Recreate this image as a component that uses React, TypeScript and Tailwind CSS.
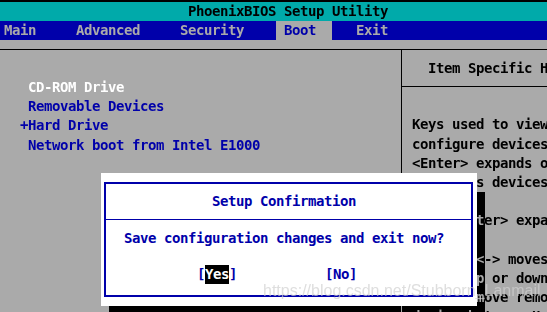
import React from 'react';

const menuItems = [
  { label: 'Main', w: 'w-[72px]' },
  { label: 'Advanced', w: 'w-[104px]' },
  { label: 'Security', w: 'w-[96px]' },
];

const bootOrder = [
  { text: ' CD-ROM Drive', active: true },
  { text: ' Removable Devices', active: false },
  { text: '+Hard Drive', active: false },
  { text: ' Network boot from Intel E1000', active: false },
];

const helpLines = [
  'Keys used to view or',
  'configure devices:',
  '<Enter> expands or',
  'collapses devices',
  '',
  '<Ctrl+Enter> expands',
  '',
  '<+> and <-> moves',
  'device up or down',
  '<n> May move removable',
  'device between Hard',
];

const App = () => {
  return (
    <div className="relative w-[547px] h-[312px] overflow-hidden bg-[#aaaaaa] flex flex-col font-['DejaVu_Sans_Mono',monospace] font-bold text-[14px] tracking-[-0.43px] whitespace-pre">
      <div className="h-[2px] bg-black shrink-0" />

      {/* title bar */}
      <div className="h-[19px] shrink-0 bg-[#00aaaa] text-black leading-[19px] pl-[188px]">
        PhoenixBIOS Setup Utility
      </div>

      {/* menu bar */}
      <div className="h-[19px] shrink-0 bg-[#0000aa] text-[#aaaaaa] leading-[19px] flex pl-[4px]">
        {menuItems.map((m) => (
          <span key={m.label} className={m.w}>
            {m.label}
          </span>
        ))}
        <span className="w-[56px] pl-[8px] bg-[#aaaaaa] text-[#0000aa]">Boot</span>
        <span className="ml-[24px]">Exit</span>
      </div>

      {/* main area */}
      <div className="mt-[9px] flex-1 flex border-t border-black">
        <div className="w-[402px] shrink-0 border-r border-black pt-[28px] pl-[20px] leading-[19.2px] text-[#0000aa]">
          {bootOrder.map((b) => (
            <div key={b.text} className={b.active ? 'text-white' : ''}>
              {b.text}
            </div>
          ))}
        </div>
        <div className="flex-1 flex flex-col text-black">
          <div className="h-[37px] shrink-0 flex items-center pl-[26px] border-b border-black">
            Item Specific Help
          </div>
          <div className="pt-[28.4px] pl-[10px] leading-[19.2px]">
            {helpLines.map((l, i) => (
              <div key={i} className="h-[19.2px]">
                {l}
              </div>
            ))}
          </div>
        </div>
      </div>

      {/* dialog shadow */}
      <div className="absolute left-[109px] top-[192px] w-[376px] h-[133px] bg-[#aaaaaa] mix-blend-difference" />

      {/* confirmation dialog */}
      <div className="absolute left-[101px] top-[173px] w-[376px] h-[133px] bg-white pt-[9px] pb-[9px] pl-[3px] pr-[4px]">
        <div className="h-full border-2 border-[#0000aa] flex flex-col text-[#0000aa]">
          <div className="h-[36px] shrink-0 flex items-center pl-[106px] border-b border-[#0000aa]">
            Setup Confirmation
          </div>
          <div className="mt-[9px] pl-[18px] leading-[19.2px]">Save configuration changes and exit now?</div>
          <div className="mt-[17px] pl-[91px] leading-[19.2px]">
            [<span className="inline-block bg-black text-white leading-[19.2px]">Yes</span>]
            {'           '}[No]
          </div>
        </div>
      </div>

      {/* watermark */}
      <div className="absolute left-[263px] top-[283px] font-['Liberation_Sans',sans-serif] font-normal tracking-normal text-[16px] leading-[16px] text-[#d0d0d0]/70">
        https://blog.csdn.net/Stubborn_Lanmail
      </div>
    </div>
  );
};

export default App;
